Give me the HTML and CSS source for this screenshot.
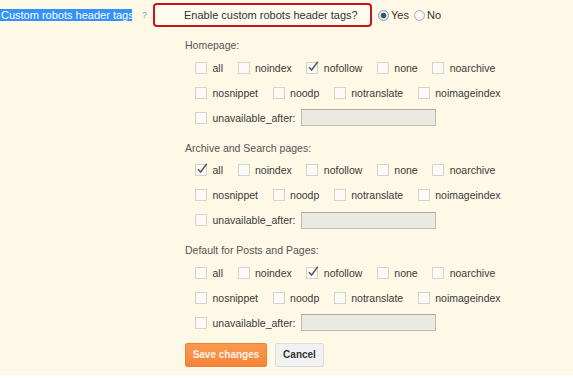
FILE: index.html
```html
<!DOCTYPE html>
<html>
<head>
<meta charset="utf-8">
<link rel="stylesheet" href="styles.css">
</head>
<body>
<div class="page">
  <div class="head">
    <span class="title">Custom robots header tags</span>
    <span class="help">?</span>
    <div class="enable">Enable custom robots header tags?</div>
    <span class="radio checked"></span><span class="rlabel">Yes</span>
    <span class="radio second"></span><span class="rlabel">No</span>
  </div>

  <div class="content">
    <div class="section">
      <div class="sec-label">Homepage:</div>
      <div class="row">
        <span class="item"><span class="cb"></span>all</span>
        <span class="item"><span class="cb"></span>noindex</span>
        <span class="item"><span class="cb on"><svg viewBox="0 0 12 12"><path d="M2 6.2 L4.6 9 L10.8 0.8"/></svg></span>nofollow</span>
        <span class="item"><span class="cb"></span>none</span>
        <span class="item"><span class="cb"></span>noarchive</span>
      </div>
      <div class="row">
        <span class="item"><span class="cb"></span>nosnippet</span>
        <span class="item"><span class="cb"></span>noodp</span>
        <span class="item"><span class="cb"></span>notranslate</span>
        <span class="item"><span class="cb"></span>noimageindex</span>
      </div>
      <div class="row">
        <span class="item"><span class="cb"></span>unavailable_after:</span>
        <span class="date"></span>
      </div>
    </div>

    <div class="section">
      <div class="sec-label">Archive and Search pages:</div>
      <div class="row">
        <span class="item"><span class="cb on"><svg viewBox="0 0 12 12"><path d="M2 6.2 L4.6 9 L10.8 0.8"/></svg></span>all</span>
        <span class="item"><span class="cb"></span>noindex</span>
        <span class="item"><span class="cb"></span>nofollow</span>
        <span class="item"><span class="cb"></span>none</span>
        <span class="item"><span class="cb"></span>noarchive</span>
      </div>
      <div class="row">
        <span class="item"><span class="cb"></span>nosnippet</span>
        <span class="item"><span class="cb"></span>noodp</span>
        <span class="item"><span class="cb"></span>notranslate</span>
        <span class="item"><span class="cb"></span>noimageindex</span>
      </div>
      <div class="row">
        <span class="item"><span class="cb"></span>unavailable_after:</span>
        <span class="date"></span>
      </div>
    </div>

    <div class="section">
      <div class="sec-label">Default for Posts and Pages:</div>
      <div class="row">
        <span class="item"><span class="cb"></span>all</span>
        <span class="item"><span class="cb"></span>noindex</span>
        <span class="item"><span class="cb on"><svg viewBox="0 0 12 12"><path d="M2 6.2 L4.6 9 L10.8 0.8"/></svg></span>nofollow</span>
        <span class="item"><span class="cb"></span>none</span>
        <span class="item"><span class="cb"></span>noarchive</span>
      </div>
      <div class="row">
        <span class="item"><span class="cb"></span>nosnippet</span>
        <span class="item"><span class="cb"></span>noodp</span>
        <span class="item"><span class="cb"></span>notranslate</span>
        <span class="item"><span class="cb"></span>noimageindex</span>
      </div>
      <div class="row">
        <span class="item"><span class="cb"></span>unavailable_after:</span>
        <span class="date"></span>
      </div>
    </div>

    <div class="buttons">
      <span class="btn save">Save changes</span>
      <span class="btn cancel">Cancel</span>
    </div>
  </div>
</div>
</body>
</html>
```

FILE: styles.css
```css
html, body {
  margin: 0;
  padding: 0;
  background: #ffffff;
}
body {
  font-family: "Liberation Sans", Arial, sans-serif;
  color: #333;
}
.page {
  width: 573px;
  height: 375px;
  background: #fef8e6;
  overflow: hidden;
}
.head {
  display: flex;
  align-items: center;
  height: 24px;
  padding-top: 3px;
}
.title {
  background: #3392fb;
  color: #fff;
  font-size: 11px;
  line-height: 12px;
  height: 12px;
  padding-left: 1px;
  width: 131px;
  white-space: nowrap;
}
.help {
  font-size: 9px;
  color: #8d97a8;
  margin-left: 10px;
  width: 6px;
}
.enable {
  box-sizing: border-box;
  margin-left: 5px;
  width: 219px;
  height: 24px;
  border: 2px solid #c8141b;
  border-radius: 4px;
  background: #fffbef;
  padding-left: 29px;
  font-size: 11px;
  line-height: 20px;
  color: #333;
  white-space: nowrap;
}
.radio {
  box-sizing: border-box;
  width: 11px;
  height: 11px;
  border-radius: 50%;
  border: 1px solid #a9b0b8;
  background: radial-gradient(circle at 50% 40%, #ffffff, #e6e6e6);
  margin-left: 6px;
}
.radio.checked {
  background: radial-gradient(circle, #2e4a66 0, #3c5a78 2.5px, #eef1f4 3.2px, #dfe3e8 100%);
  border-color: #8f9aa6;
}
.radio.second {
  margin-left: 5px;
}
.rlabel {
  font-size: 11px;
  color: #333;
  margin-left: 2px;
}
.content {
  padding-left: 185px;
  padding-top: 8px;
}
.section {
  margin-bottom: 7.5px;
}
.sec-label {
  height: 20px;
  line-height: 20px;
  font-size: 10.5px;
  color: #555;
}
.row {
  display: flex;
  align-items: center;
  height: 25px;
  padding-left: 10px;
  gap: 14.5px;
}
.item {
  display: flex;
  align-items: center;
  font-size: 10.5px;
  color: #3a3a3a;
  white-space: nowrap;
}
.cb {
  position: relative;
  box-sizing: border-box;
  width: 12px;
  height: 12px;
  border: 1px solid #d6d3cb;
  background: #fbfaf6;
  margin-right: 5.5px;
  flex: none;
}
.cb svg {
  position: absolute;
  left: 0;
  top: -2px;
  width: 12px;
  height: 12px;
  overflow: visible;
}
.cb svg path {
  fill: none;
  stroke: #5a5a5a;
  stroke-width: 1.5;
}
.date {
  box-sizing: border-box;
  width: 135px;
  height: 17px;
  background: #eaeae3;
  border: 1px solid #bdbdb5;
  border-top-color: #a9a9a2;
  margin-left: -9px;
}
.buttons {
  display: flex;
  gap: 8px;
  margin-top: 0.5px;
}
.btn {
  box-sizing: border-box;
  height: 24px;
  line-height: 22px;
  font-size: 10px;
  font-weight: bold;
  text-align: center;
  border-radius: 2px;
}
.save {
  width: 82px;
  background: linear-gradient(#f99a4e, #f4843a);
  border: 1px solid #ee8136;
  color: #fff3e8;
}
.cancel {
  width: 49px;
  background: #f2f2f2;
  border: 1px solid #dcdcdc;
  color: #333;
}
```
